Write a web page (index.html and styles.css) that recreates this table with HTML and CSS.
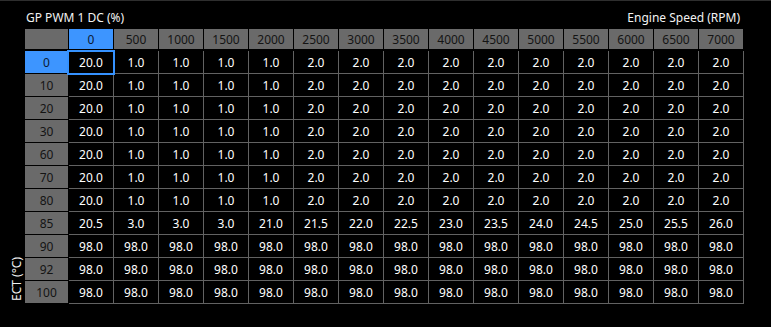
FILE: index.html
```html
<!DOCTYPE html>
<html>
<head>
<meta charset="utf-8">
<link rel="stylesheet" href="styles.css">
</head>
<body>
<div class="panel">
  <div class="titles">
    <span>GP PWM 1 DC (%)</span>
    <span>Engine Speed (RPM)</span>
  </div>
  <div class="main">
    <div class="axis"><span>ECT (°C)</span></div>
    <div class="grid">
      <div class="hd"></div>
      <div class="hd active">0</div><div class="hd">500</div><div class="hd">1000</div><div class="hd">1500</div><div class="hd">2000</div><div class="hd">2500</div><div class="hd">3000</div><div class="hd">3500</div><div class="hd">4000</div><div class="hd">4500</div><div class="hd">5000</div><div class="hd">5500</div><div class="hd">6000</div><div class="hd">6500</div><div class="hd">7000</div>

      <div class="rh active">0</div>
      <div class="c">20.0</div><div class="c">1.0</div><div class="c">1.0</div><div class="c">1.0</div><div class="c">1.0</div><div class="c">2.0</div><div class="c">2.0</div><div class="c">2.0</div><div class="c">2.0</div><div class="c">2.0</div><div class="c">2.0</div><div class="c">2.0</div><div class="c">2.0</div><div class="c">2.0</div><div class="c">2.0</div>

      <div class="rh">10</div>
      <div class="c">20.0</div><div class="c">1.0</div><div class="c">1.0</div><div class="c">1.0</div><div class="c">1.0</div><div class="c">2.0</div><div class="c">2.0</div><div class="c">2.0</div><div class="c">2.0</div><div class="c">2.0</div><div class="c">2.0</div><div class="c">2.0</div><div class="c">2.0</div><div class="c">2.0</div><div class="c">2.0</div>

      <div class="rh">20</div>
      <div class="c">20.0</div><div class="c">1.0</div><div class="c">1.0</div><div class="c">1.0</div><div class="c">1.0</div><div class="c">2.0</div><div class="c">2.0</div><div class="c">2.0</div><div class="c">2.0</div><div class="c">2.0</div><div class="c">2.0</div><div class="c">2.0</div><div class="c">2.0</div><div class="c">2.0</div><div class="c">2.0</div>

      <div class="rh">30</div>
      <div class="c">20.0</div><div class="c">1.0</div><div class="c">1.0</div><div class="c">1.0</div><div class="c">1.0</div><div class="c">2.0</div><div class="c">2.0</div><div class="c">2.0</div><div class="c">2.0</div><div class="c">2.0</div><div class="c">2.0</div><div class="c">2.0</div><div class="c">2.0</div><div class="c">2.0</div><div class="c">2.0</div>

      <div class="rh">60</div>
      <div class="c">20.0</div><div class="c">1.0</div><div class="c">1.0</div><div class="c">1.0</div><div class="c">1.0</div><div class="c">2.0</div><div class="c">2.0</div><div class="c">2.0</div><div class="c">2.0</div><div class="c">2.0</div><div class="c">2.0</div><div class="c">2.0</div><div class="c">2.0</div><div class="c">2.0</div><div class="c">2.0</div>

      <div class="rh">70</div>
      <div class="c">20.0</div><div class="c">1.0</div><div class="c">1.0</div><div class="c">1.0</div><div class="c">1.0</div><div class="c">2.0</div><div class="c">2.0</div><div class="c">2.0</div><div class="c">2.0</div><div class="c">2.0</div><div class="c">2.0</div><div class="c">2.0</div><div class="c">2.0</div><div class="c">2.0</div><div class="c">2.0</div>

      <div class="rh">80</div>
      <div class="c">20.0</div><div class="c">1.0</div><div class="c">1.0</div><div class="c">1.0</div><div class="c">1.0</div><div class="c">2.0</div><div class="c">2.0</div><div class="c">2.0</div><div class="c">2.0</div><div class="c">2.0</div><div class="c">2.0</div><div class="c">2.0</div><div class="c">2.0</div><div class="c">2.0</div><div class="c">2.0</div>

      <div class="rh">85</div>
      <div class="c">20.5</div><div class="c">3.0</div><div class="c">3.0</div><div class="c">3.0</div><div class="c">21.0</div><div class="c">21.5</div><div class="c">22.0</div><div class="c">22.5</div><div class="c">23.0</div><div class="c">23.5</div><div class="c">24.0</div><div class="c">24.5</div><div class="c">25.0</div><div class="c">25.5</div><div class="c">26.0</div>

      <div class="rh">90</div>
      <div class="c">98.0</div><div class="c">98.0</div><div class="c">98.0</div><div class="c">98.0</div><div class="c">98.0</div><div class="c">98.0</div><div class="c">98.0</div><div class="c">98.0</div><div class="c">98.0</div><div class="c">98.0</div><div class="c">98.0</div><div class="c">98.0</div><div class="c">98.0</div><div class="c">98.0</div><div class="c">98.0</div>

      <div class="rh">92</div>
      <div class="c">98.0</div><div class="c">98.0</div><div class="c">98.0</div><div class="c">98.0</div><div class="c">98.0</div><div class="c">98.0</div><div class="c">98.0</div><div class="c">98.0</div><div class="c">98.0</div><div class="c">98.0</div><div class="c">98.0</div><div class="c">98.0</div><div class="c">98.0</div><div class="c">98.0</div><div class="c">98.0</div>

      <div class="rh">100</div>
      <div class="c">98.0</div><div class="c">98.0</div><div class="c">98.0</div><div class="c">98.0</div><div class="c">98.0</div><div class="c">98.0</div><div class="c">98.0</div><div class="c">98.0</div><div class="c">98.0</div><div class="c">98.0</div><div class="c">98.0</div><div class="c">98.0</div><div class="c">98.0</div><div class="c">98.0</div><div class="c">98.0</div>

      <div class="selection"></div>
    </div>
  </div>
</div>
</body>
</html>
```

FILE: styles.css
```css
* { box-sizing: border-box; }

html, body {
  margin: 0;
  background: #000;
}

body {
  height: 327px;
  border-top: 1px solid #2e2e2e;
  font-family: "Noto Sans", "Open Sans", sans-serif;
  font-size: 12px;
  color: #fff;
  overflow: hidden;
}

.panel {
  padding-top: 9px;
}

.titles {
  display: flex;
  justify-content: space-between;
  width: 719px;
  margin-left: 25px;
  padding-left: 1px;
  padding-right: 4px;
  height: 16px;
  line-height: 16px;
  margin-bottom: 3px;
  color: #f2f2f2;
}

.main {
  display: flex;
}

.axis {
  width: 25px;
  display: flex;
  flex-direction: column;
  justify-content: flex-end;
}

.axis span {
  writing-mode: vertical-rl;
  transform: rotate(180deg);
  line-height: 16px;
  width: 16px;
  margin-left: 9px;
  margin-bottom: 3px;
  color: #f2f2f2;
}

.grid {
  position: relative;
  display: grid;
  grid-template-columns: 44px repeat(15, 45px);
  grid-template-rows: 22px repeat(11, 23px);
}

.hd, .rh, .c {
  display: flex;
  align-items: center;
  justify-content: center;
}

.hd {
  background: #6a6a6a;
  color: #141414;
  border-right: 1px solid #000;
  border-bottom: 2px solid #000;
}

.rh {
  background: #6a6a6a;
  color: #141414;
  border-right: 1px solid #000;
  border-bottom: 1px solid #000;
}

.hd.active, .rh.active {
  background: #3d95ff;
  color: #0c1a33;
}

.c {
  color: #fff;
  border-right: 1px solid #626262;
  border-bottom: 1px solid #626262;
}

.selection {
  position: absolute;
  left: 42px;
  top: 21px;
  width: 48px;
  height: 25px;
  border: 2px solid #3592ff;
  pointer-events: none;
}
```
